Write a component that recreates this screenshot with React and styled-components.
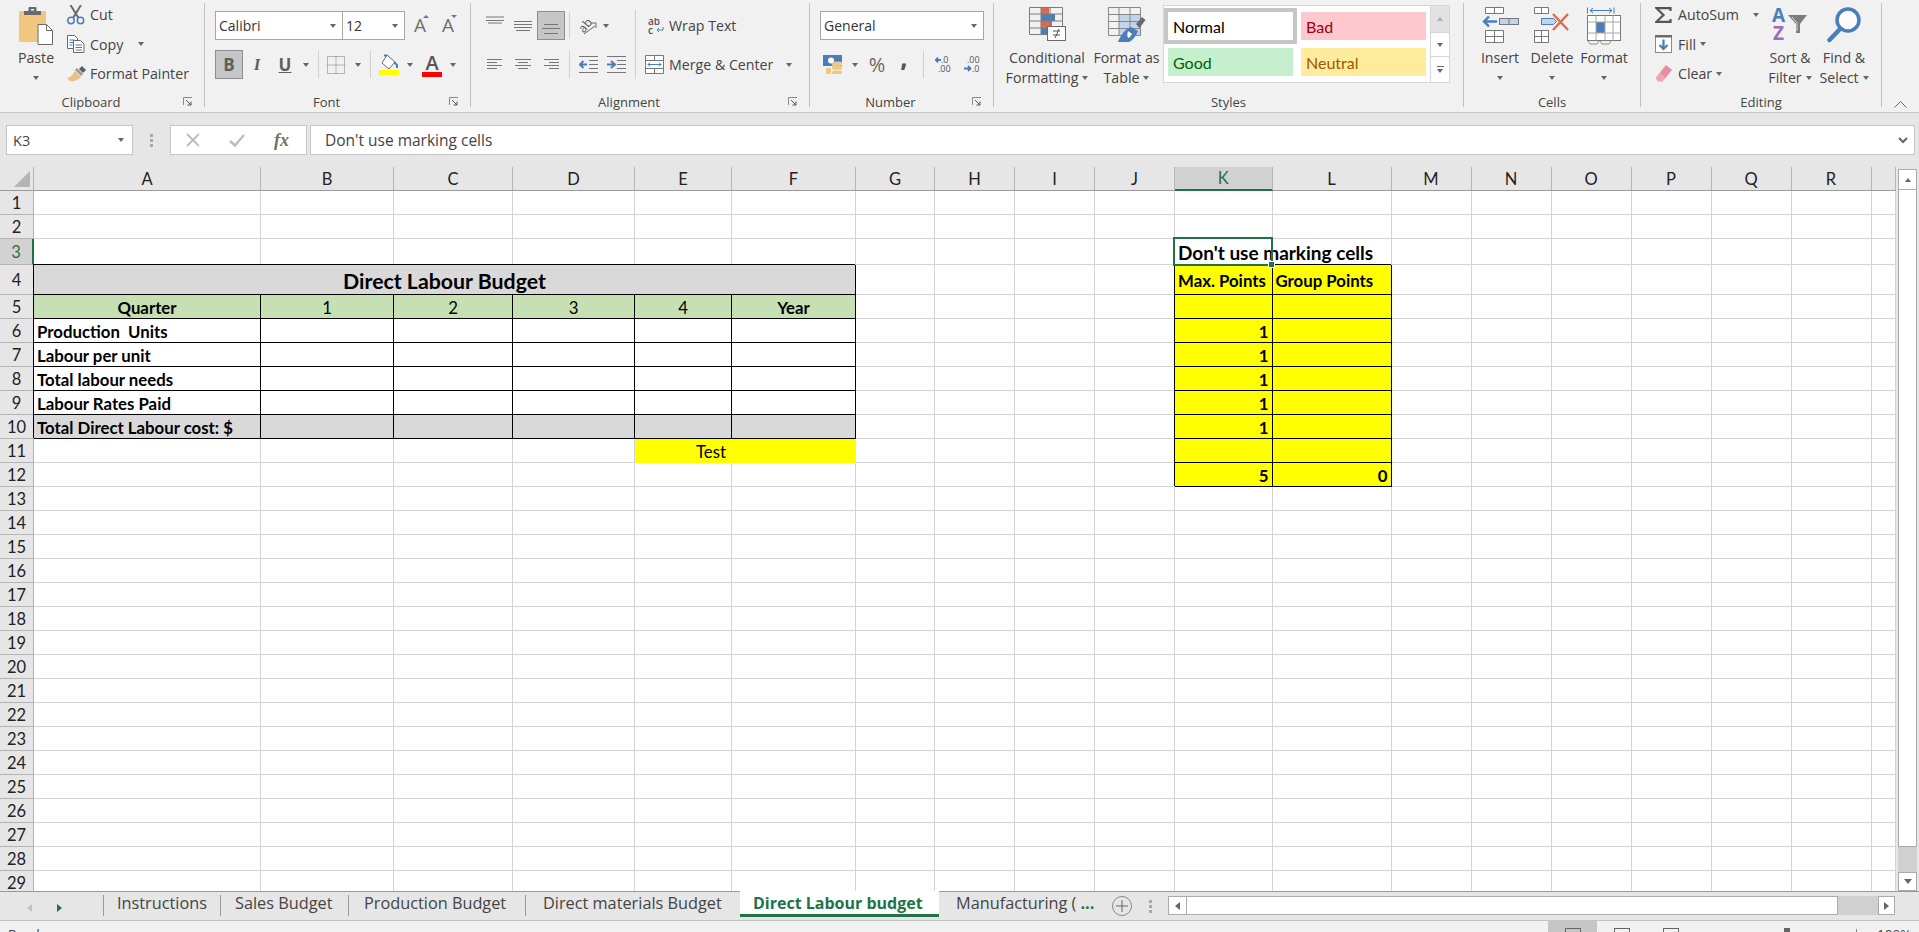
import styled, { createGlobalStyle } from 'styled-components'

const UI_FONT = '"Open Sans", "Noto Sans", sans-serif'
const SHEET_FONT = 'Lato, "Liberation Sans", sans-serif'
const BLUE = '#4a7eba'
const GRAY = '#6a6a6a'
const GREEN = '#217346'

const GlobalStyle = createGlobalStyle`
    html, body {
        margin: 0;
        height: 932px;
        overflow: hidden;
        background: #f1f1f1;
        font-family: ${UI_FONT};
    }
    svg { display: block; flex-shrink: 0; }
`

const Page = styled.div`
    width: 1919px;
    height: 932px;
    display: flex;
    flex-direction: column;
    overflow: hidden;
`

/* ---------- ribbon ---------- */

const Ribbon = styled.div`
    display: flex;
    height: 112px;
    flex-shrink: 0;
    background: #f1f1f1;
    border-bottom: 1px solid #c9c9c9;
    color: #444;
    font-size: 14.2px;
`

const Group = styled.div`
    width: ${({ $w }) => $w}px;
    flex-shrink: 0;
    display: flex;
    flex-direction: column;
`

const GroupBody = styled.div`
    height: 92px;
    display: flex;
    padding-left: ${({ $pl }) => $pl || 0}px;
`

const GroupFooter = styled.div`
    position: relative;
    height: 20px;
    line-height: 20px;
    text-align: center;
    padding-right: ${({ $launcher }) => ($launcher ? 22 : 0)}px;
    font-size: 13px;
`

const Launcher = styled.svg`
    position: absolute;
    right: 11px;
    top: 5px;
`

const GroupSep = styled.div`
    width: 1px;
    height: 104px;
    margin-top: 3px;
    background: #c2c2c2;
    flex-shrink: 0;
`

const BigButton = styled.div`
    width: ${({ $w }) => $w}px;
    flex-shrink: 0;
    margin-left: ${({ $ml }) => $ml || 0}px;
    display: flex;
    flex-direction: column;
    align-items: center;
    padding-top: 7px;
`

const BigIcon = styled.div`
    height: 38px;
    margin-bottom: 3px;
    display: flex;
    align-items: flex-start;
`

const BigLine = styled.div`
    height: 20px;
    line-height: 20px;
    white-space: nowrap;
    display: flex;
    align-items: center;
`

const Caret = styled.span`
    display: inline-block;
    width: 0;
    height: 0;
    flex-shrink: 0;
    margin-left: ${({ $ml }) => $ml || 0}px;
    border-left: 3.5px solid transparent;
    border-right: 3.5px solid transparent;
    border-top: 4px solid #666;
`

const SmallStack = styled.div`
    display: flex;
    flex-direction: column;
    margin-left: ${({ $ml }) => $ml || 0}px;
    width: ${({ $w }) => ($w ? `${$w}px` : 'auto')};
`

const SmallButton = styled.div`
    display: flex;
    align-items: center;
    height: 29.5px;
    white-space: nowrap;
`

const SmallIcon = styled.div`
    width: ${({ $w }) => $w || 23}px;
    flex-shrink: 0;
    padding-left: ${({ $pl }) => $pl || 0}px;
    box-sizing: border-box;
`

const ToolColumn = styled.div`
    display: flex;
    flex-direction: column;
    padding-top: 11px;
    gap: 10px;
    width: ${({ $w }) => ($w ? `${$w}px` : 'auto')};
`

const ToolRow = styled.div`
    display: flex;
    align-items: center;
    height: 29px;
    white-space: nowrap;
`

const Select = styled.div`
    width: ${({ $w }) => $w}px;
    height: 29px;
    box-sizing: border-box;
    margin-left: ${({ $ml }) => $ml || 0}px;
    background: #fff;
    border: 1px solid #a6a6a6;
    display: flex;
    align-items: center;
    justify-content: space-between;
    padding: 0 6px 0 3px;
    color: #333;
    font-size: 14px;
`

const ToolBtn = styled.div`
    width: ${({ $w }) => $w || 28}px;
    height: 29px;
    box-sizing: border-box;
    flex-shrink: 0;
    margin-left: ${({ $ml }) => $ml || 0}px;
    display: flex;
    align-items: center;
    justify-content: center;
    ${({ $on }) => $on && 'background: #c6c6c6; border: 1px solid #8e8e8e;'}
`

const CaretBox = styled.div`
    width: ${({ $w }) => $w || 14}px;
    display: flex;
    justify-content: center;
    flex-shrink: 0;
`

const RowSep = styled.div`
    width: 1px;
    height: 27px;
    margin-left: ${({ $ml }) => $ml || 0}px;
    background: #d0d0d0;
    flex-shrink: 0;
`

const TallSep = styled.div`
    width: 1px;
    height: 69px;
    margin-top: 10px;
    background: #d0d0d0;
    flex-shrink: 0;
`

const FaceLetter = styled.span`
    font-family: ${({ $serif }) => ($serif ? '"Liberation Serif", serif' : UI_FONT)};
    font-weight: 700;
    font-style: ${({ $italic }) => ($italic ? 'italic' : 'normal')};
    text-decoration: ${({ $under }) => ($under ? 'underline' : 'none')};
    font-size: 17px;
    color: #5f5f5f;
`

const ResizeFont = styled.div`
    position: relative;
    width: ${({ $w }) => $w}px;
    margin-left: ${({ $ml }) => $ml || 0}px;
    font-size: 19px;
    color: #6f6f6f;
    text-align: left;
    line-height: 29px;
    &::after {
        content: '';
        position: absolute;
        left: 9px;
        top: 4px;
        border-left: 3px solid transparent;
        border-right: 3px solid transparent;
        ${({ $up }) => ($up ? `border-bottom: 3px solid ${BLUE};` : `border-top: 3px solid ${BLUE};`)}
    }
`

const ColorLetter = styled.div`
    display: flex;
    flex-direction: column;
    align-items: center;
    width: 20px;
    font-size: 20px;
    line-height: 19px;
    font-weight: 600;
    color: #555;
    &::after {
        content: '';
        width: 20px;
        height: 5px;
        background: ${({ $bar }) => $bar};
    }
`

const Percent = styled.span`
    font-size: 20px;
    color: #666;
`

const Comma = styled.span`
    font-size: 22px;
    font-weight: 800;
    color: #555;
    line-height: 16px;
    padding-bottom: 13px;
`

const Gallery = styled.div`
    width: 287px;
    height: 78px;
    box-sizing: border-box;
    margin-top: 5px;
    background: #fff;
    border: 1px solid #d6d6d6;
    display: flex;
    justify-content: space-between;
`

const StyleGrid = styled.div`
    display: grid;
    grid-template-columns: 125px 125px;
    grid-template-rows: 28px 28px;
    gap: 8px;
    padding: 6px 0 0 4px;
`

const StyleSwatch = styled.div`
    background: ${({ $bg }) => $bg};
    color: ${({ $color }) => $color};
    font-family: ${SHEET_FONT};
    font-size: 16px;
    display: flex;
    align-items: center;
    padding-left: 5px;
    ${({ $active }) => $active && 'outline: 4px solid #c6c6c6;'}
`

const GalleryScroll = styled.div`
    width: 18px;
    display: flex;
    flex-direction: column;
    border-left: 1px solid #d6d6d6;
`

const GalleryBtn = styled.div`
    height: ${({ $h }) => $h}px;
    box-sizing: border-box;
    display: flex;
    flex-direction: column;
    gap: 2px;
    align-items: center;
    justify-content: center;
    border-top: ${({ $line }) => ($line ? '1px solid #d6d6d6' : 'none')};
    background: ${({ $dim }) => ($dim ? '#e2e2e2' : '#fff')};
`

const GalleryBar = styled.span`
    width: 7px;
    height: 1px;
    background: #666;
`

const UpArrow = styled.span`
    width: 0;
    height: 0;
    border-left: 3.5px solid transparent;
    border-right: 3.5px solid transparent;
    border-bottom: 4px solid ${({ $c }) => $c || '#b0b0b0'};
`

const CollapseBox = styled.div`
    flex: 1;
    display: flex;
    justify-content: center;
    padding-top: 100px;
`

/* ---------- formula bar ---------- */

const FormulaBar = styled.div`
    height: 54px;
    flex-shrink: 0;
    box-sizing: border-box;
    background: #e6e6e6;
    display: flex;
    align-items: flex-start;
    padding: 12px 4px 0 6px;
    font-size: 14.5px;
    color: #444;
`

const NameBox = styled.div`
    width: 127px;
    height: 30px;
    box-sizing: border-box;
    background: #fff;
    border: 1px solid #c6c6c6;
    display: flex;
    align-items: center;
    justify-content: space-between;
    padding: 0 8px 0 6px;
`

const Grip = styled.div`
    width: 37px;
    height: 30px;
    display: flex;
    flex-direction: column;
    align-items: center;
    justify-content: center;
    gap: 2px;
    span {
        width: 3px;
        height: 3px;
        background: #a8a8a8;
    }
`

const FxBox = styled.div`
    width: 137px;
    height: 30px;
    box-sizing: border-box;
    background: #fff;
    border: 1px solid #c6c6c6;
    display: flex;
    align-items: center;
    padding-left: 15px;
    gap: 29px;
`

const FxLabel = styled.span`
    font-family: "Liberation Serif", serif;
    font-style: italic;
    font-weight: 700;
    font-size: 18px;
    color: #6f6f6f;
`

const FormulaInput = styled.div`
    flex: 1;
    height: 30px;
    margin-left: 3px;
    box-sizing: border-box;
    background: #fff;
    border: 1px solid #c6c6c6;
    display: flex;
    align-items: center;
    justify-content: space-between;
    padding: 0 6px 0 14px;
    font-size: 15.5px;
`

/* ---------- sheet ---------- */

const SheetArea = styled.div`
    height: 724px;
    flex-shrink: 0;
    display: flex;
    background: #e6e6e6;
`

const COLUMNS = [
    ['A', 227], ['B', 133], ['C', 119], ['D', 122], ['E', 97], ['F', 124],
    ['G', 79], ['H', 80], ['I', 80], ['J', 80], ['K', 97.5], ['L', 119],
    ['M', 80], ['N', 80], ['O', 80], ['P', 80], ['Q', 80], ['R', 80], ['', 24],
]
const ROW_HEIGHTS = Array.from({ length: 29 }, (_, i) => (i === 2 ? 26 : i === 3 ? 30 : 24))

const Sheet = styled.div`
    width: 1896px;
    height: 724px;
    overflow: hidden;
    background: #fff;
    display: grid;
    grid-template-columns: 34px ${COLUMNS.map((c) => `${c[1]}px`).join(' ')};
    grid-template-rows: 24px ${ROW_HEIGHTS.map((h) => `${h}px`).join(' ')};
    font-family: ${SHEET_FONT};
`

const Corner = styled.div`
    background: #e6e6e6;
    border-right: 1px solid #b4b4b4;
    border-bottom: 1px solid #9a9a9a;
    position: relative;
    &::after {
        content: '';
        position: absolute;
        right: 3px;
        bottom: 3px;
        width: 16px;
        height: 16px;
        background: #b4b4b4;
        clip-path: polygon(100% 0, 100% 100%, 0 100%);
    }
`

const ColHead = styled.div`
    background: ${({ $sel }) => ($sel ? '#d2d2d2' : '#e6e6e6')};
    border-right: 1px solid #b4b4b4;
    border-bottom: ${({ $sel }) => ($sel ? `2px solid ${GREEN}` : '1px solid #9a9a9a')};
    color: ${({ $sel }) => ($sel ? GREEN : '#222')};
    font-size: 16.5px;
    display: flex;
    align-items: center;
    justify-content: center;
`

const RowHead = styled.div`
    background: ${({ $sel }) => ($sel ? '#d2d2d2' : '#e6e6e6')};
    border-right: ${({ $sel }) => ($sel ? `2px solid ${GREEN}` : '1px solid #b4b4b4')};
    border-bottom: 1px solid #b4b4b4;
    color: ${({ $sel }) => ($sel ? GREEN : '#222')};
    font-size: 16.5px;
    display: flex;
    align-items: center;
    justify-content: center;
`

const ALIGN = { left: 'flex-start', center: 'center', right: 'flex-end' }

const Cell = styled.div`
    min-width: 0;
    position: relative;
    grid-column: span ${({ $span }) => $span || 1};
    display: flex;
    align-items: center;
    justify-content: ${({ $align }) => ALIGN[$align || 'left']};
    white-space: pre;
    padding: 2px 3px 0 ${({ $pl }) => $pl || 3}px;
    box-sizing: border-box;
    color: #000;
    font-size: ${({ $size }) => $size || 16.8}px;
    font-weight: ${({ $bold }) => ($bold ? 700 : 400)};
    background: ${({ $fill }) => $fill || 'transparent'};
    border-right: 1px solid ${({ $box, $fill }) => ($box ? '#000' : $fill || '#d4d4d4')};
    border-bottom: 1px solid ${({ $box, $fill }) => ($box ? '#000' : $fill || '#d4d4d4')};
    ${({ $box }) => $box && 'box-shadow: -1px -1px 0 #000;'}
`

const Selection = styled.span`
    position: absolute;
    z-index: 2;
    left: -2px;
    top: -2px;
    right: -1px;
    bottom: -2px;
    border: 2px solid ${GREEN};
    pointer-events: none;
    &::after {
        content: '';
        position: absolute;
        right: -4px;
        bottom: -4px;
        width: 5px;
        height: 5px;
        background: ${GREEN};
        border: 1px solid #fff;
    }
`

const GREY = '#d9d9d9'
const LIME = '#c6e0b4'
const YELLOW = '#ffff00'

const buildCells = () => {
    const cells = {}
    cells.A4 = { text: 'Direct Labour Budget', span: 6, fill: GREY, box: true, bold: true, align: 'center', size: 21.3 }
    cells.A5 = { text: 'Quarter', fill: LIME, box: true, bold: true, align: 'center' }
    ;['B', 'C', 'D', 'E'].forEach((col, i) => {
        cells[`${col}5`] = { text: String(i + 1), fill: LIME, box: true, align: 'center' }
    })
    cells.F5 = { text: 'Year', fill: LIME, box: true, bold: true, align: 'center' }
    const labels = ['Production  Units', 'Labour per unit', 'Total labour needs', 'Labour Rates Paid', 'Total Direct Labour cost: $']
    labels.forEach((text, i) => {
        const row = i + 6
        const fill = row === 10 ? GREY : '#fff'
        cells[`A${row}`] = { text, fill, box: true, bold: true }
        ;['B', 'C', 'D', 'E', 'F'].forEach((col) => {
            cells[`${col}${row}`] = { fill, box: true }
        })
    })
    cells.E11 = { text: 'Test', span: 2, fill: YELLOW, pl: 61 }
    cells.K3 = { text: "Don't use marking cells", bold: true, size: 19, selected: true }
    cells.K4 = { text: 'Max. Points', fill: YELLOW, box: true, bold: true }
    cells.L4 = { text: 'Group Points', fill: YELLOW, box: true, bold: true }
    for (let row = 5; row <= 12; row++) {
        cells[`K${row}`] = { fill: YELLOW, box: true, bold: true, align: 'right' }
        cells[`L${row}`] = { fill: YELLOW, box: true, bold: true, align: 'right' }
    }
    for (let row = 6; row <= 10; row++) cells[`K${row}`].text = '1'
    cells.K12.text = '5'
    cells.L12.text = '0'
    return cells
}

const CELLS = buildCells()

const VScroll = styled.div`
    width: 23px;
    flex-shrink: 0;
    box-sizing: border-box;
    padding: 2px 2px 0 2px;
    display: flex;
    flex-direction: column;
`

const ScrollBtn = styled.div`
    height: ${({ $h }) => $h}px;
    box-sizing: border-box;
    background: #fff;
    border: 1px solid #ababab;
    display: flex;
    align-items: center;
    justify-content: center;
    flex-shrink: 0;
`

const ScrollThumb = styled.div`
    height: 657px;
    box-sizing: border-box;
    background: #fff;
    border: 1px solid #ababab;
    border-top: none;
    flex-shrink: 0;
`

const ScrollTrack = styled.div`
    flex: 1;
    background: #d0d0d0;
`

const DownArrow = styled.span`
    width: 0;
    height: 0;
    border-left: 4px solid transparent;
    border-right: 4px solid transparent;
    border-top: 5px solid #666;
`

/* ---------- tabs ---------- */

const TabBar = styled.div`
    height: 30px;
    flex-shrink: 0;
    box-sizing: border-box;
    background: #e6e6e6;
    border-top: 1px solid #9a9a9a;
    border-bottom: 1px solid #c4c4c4;
    display: flex;
    font-size: 16.3px;
    color: #444;
`

const TabNav = styled.div`
    width: 103px;
    display: flex;
    align-items: center;
    padding: 3px 0 0 27px;
    box-sizing: border-box;
    gap: 25px;
`

const NavArrow = styled.span`
    width: 0;
    height: 0;
    border-top: 4.5px solid transparent;
    border-bottom: 4.5px solid transparent;
    ${({ $dir, $c }) => ($dir === 'left' ? `border-right: 5px solid ${$c};` : `border-left: 5px solid ${$c};`)}
`

const Tab = styled.div`
    width: ${({ $w }) => $w}px;
    box-sizing: border-box;
    flex-shrink: 0;
    height: 21px;
    margin-top: 3px;
    padding: 0 0 5px ${({ $pl }) => $pl || 13}px;
    white-space: nowrap;
    overflow: hidden;
    ${({ $sep }) => $sep && 'border-left: 1px solid #9a9a9a;'}
    display: flex;
    align-items: center;
`

const ActiveTab = styled(Tab)`
    height: 26px;
    margin-top: -1px;
    padding-bottom: 0;
    background: #fff;
    color: ${GREEN};
    font-weight: 700;
    font-size: 16px;
    border-bottom: 3px solid ${GREEN};
`

const TabMore = styled.span`
    color: ${GREEN};
    margin-left: 4px;
    font-weight: 700;
`

const AddSheet = styled.div`
    width: 20px;
    height: 20px;
    box-sizing: border-box;
    margin: 4px 0 0 2px;
    border: 1px solid #888;
    border-radius: 50%;
    display: flex;
    align-items: center;
    justify-content: center;
    color: #666;
    flex-shrink: 0;
`

const TabGrip = styled(Grip)`
    width: 36px;
    height: 28px;
`

const HScroll = styled.div`
    width: 727px;
    height: 19px;
    box-sizing: border-box;
    margin-top: 4px;
    display: flex;
    background: #d0d0d0;
`

const HBtn = styled.div`
    width: ${({ $w }) => $w}px;
    box-sizing: border-box;
    background: #fff;
    border: 1px solid #ababab;
    display: flex;
    align-items: center;
    justify-content: center;
`

const HThumb = styled.div`
    width: 651px;
    box-sizing: border-box;
    background: #fff;
    border: 1px solid #ababab;
    border-left: none;
`

const HGap = styled.div`
    flex: 1;
`

/* ---------- status bar ---------- */

const StatusBar = styled.div`
    flex: 1;
    min-height: 0;
    background: #f1f1f1;
    display: flex;
    overflow: hidden;
    font-size: 13.5px;
    color: #444;
`

const Ready = styled.div`
    padding: 4px 0 0 8px;
    width: 1548px;
    box-sizing: border-box;
`

const ViewBtn = styled.div`
    width: 49px;
    height: 11px;
    background: ${({ $on }) => ($on ? '#c6c6c6' : 'transparent')};
    display: flex;
    justify-content: center;
    padding-top: 7px;
    box-sizing: border-box;
`

const ViewBar = styled.span`
    width: 16px;
    height: 4px;
    border: 1px solid #666;
    border-bottom: none;
    box-sizing: border-box;
`

const SliderMark = styled.span`
    margin: ${({ $top }) => $top}px 0 0 ${({ $ml }) => $ml}px;
    width: ${({ $w }) => $w}px;
    height: 6px;
    background: ${({ $c }) => $c};
    flex-shrink: 0;
`

const Zoom = styled.div`
    margin-left: 20px;
    padding-top: 4px;
`

/* ---------- icons ---------- */

const PasteIcon = () => (
    <svg width="34" height="38" viewBox="0 0 34 38">
        <rect x="0" y="4" width="27" height="31" rx="1" fill="#f0c77f" />
        <rect x="5" y="4" width="17" height="4" fill="#6a6a6a" />
        <rect x="9.5" y="0" width="8" height="5" rx="1" fill="#6a6a6a" />
        <rect x="12" y="2" width="3" height="1.5" fill="#f1f1f1" />
        <path d="M19 17.5h8.5l6 6v14H19z" fill="#fff" stroke="#6a6a6a" />
        <path d="M27.5 17.5v6h6" fill="none" stroke="#6a6a6a" />
    </svg>
)

const CutIcon = () => (
    <svg width="18" height="20" viewBox="0 0 18 20">
        <path d="M6 13L14 0M11.5 13L3.5 0" stroke={GRAY} strokeWidth="2" fill="none" />
        <circle cx="4" cy="15.5" r="3.2" fill="none" stroke={BLUE} strokeWidth="1.5" />
        <circle cx="13.5" cy="15.5" r="3.2" fill="none" stroke={BLUE} strokeWidth="1.5" />
    </svg>
)

const CopyIcon = () => (
    <svg width="18" height="18" viewBox="0 0 18 18">
        <path d="M.5.5h7l3 3v10h-10z" fill="#fff" stroke={GRAY} />
        <path d="M2.5 5h5M2.5 7.5h5M2.5 10h3" stroke={BLUE} />
        <path d="M6.5 5.5h7l3.5 3.5v8.500h-10.500z" fill="#fff" stroke={GRAY} />
        <path d="M8.500 10h6.500M8.500 12.500h6.500M8.500 15h6.500" stroke={BLUE} />
    </svg>
)

const PainterIcon = () => (
    <svg width="19" height="16" viewBox="0 0 19 16">
        <path d="M0 12C4 12 6 8 8 5l6 6c-3 3-8 5-11 4z" fill="#e9bf82" />
        <path d="M8 4l2-2 6 6-2 2z" fill="#9a9a9a" />
        <path d="M12 3l3-3 4 4-3 3z" fill="#5f5f5f" />
    </svg>
)

const BordersIcon = () => (
    <svg width="18" height="18" viewBox="0 0 18 18">
        <path d="M.5.500h17v17h-17zM9 .5v17M.5 9h17" fill="none" stroke="#777" strokeDasharray="1 1" />
    </svg>
)

const FillIcon = () => (
    <svg width="20" height="21" viewBox="0 0 20 21">
        <path d="M8 1l8 7-6 7-7-6z" fill="#fff" stroke={GRAY} />
        <path d="M5 1.500h3M15 8l3 3v3" fill="none" stroke={BLUE} strokeWidth="2" />
        <rect x="0" y="16" width="20" height="5" fill="#ffff00" />
    </svg>
)

const LinesIcon = ({ lines, w = 20, h = 22 }) => (
    <svg width={w} height={h} viewBox={`0 0 ${w} ${h}`}>
        {lines.map(([x1, x2, y]) => (
            <line key={`${x1}-${y}`} x1={x1} x2={x2} y1={y} y2={y} stroke="#767676" />
        ))}
    </svg>
)

const OrientIcon = () => (
    <svg width="20" height="20" viewBox="0 0 20 20">
        <text x="1" y="15" fontSize="12" fontFamily={UI_FONT} fill="#555" transform="rotate(-50 6 11)">ab</text>
        <path d="M6 18l11-8M13 7h5v5" fill="none" stroke="#666" />
    </svg>
)

const IndentIcon = ({ flip }) => (
    <svg width="19" height="17" viewBox="0 0 19 17">
        {flip ? (
            <path d="M0 8.500h7M4 5l4 3.500-4 3.500" fill="none" stroke={BLUE} strokeWidth="2" />
        ) : (
            <path d="M8 8.500H1M4.500 5L1 8.500 4.500 12" fill="none" stroke={BLUE} strokeWidth="2" />
        )}
        <path d="M0 .5h19M0 16.500h19M10 4.500h9M10 8.500h9M10 12.500h9" stroke="#767676" />
    </svg>
)

const WrapIcon = () => (
    <svg width="17" height="16" viewBox="0 0 17 16">
        <text x="0" y="7" fontSize="10" fontFamily={UI_FONT} fill="#555" fontWeight="600">ab</text>
        <text x="0" y="15.500" fontSize="10" fontFamily={UI_FONT} fill="#555" fontWeight="600">c</text>
        <path d="M15 9v3H9M11 10l-2 2 2 2" fill="none" stroke={BLUE} />
    </svg>
)

const MergeIcon = () => (
    <svg width="19" height="19" viewBox="0 0 19 19">
        <path d="M.5.500h18v18H.5zM.5 5.500h18M.5 13.500h18M9.500.5v5M9.500 13.500v5" fill="#fff" stroke="#767676" />
        <path d="M3 9.500h13M5 7.500l-2 2 2 2M14 7.500l2 2-2 2" fill="none" stroke={BLUE} />
    </svg>
)

const CurrencyIcon = () => (
    <svg width="20" height="20" viewBox="0 0 20 20">
        <rect x="0" y="0" width="19" height="11" fill={BLUE} />
        <circle cx="8" cy="5.500" r="3" fill="#fff" />
        <rect x="9" y="7" width="10" height="3.500" rx="1.500" fill="#f0c77f" stroke="#f1f1f1" strokeWidth=".5" />
        <rect x="9" y="11" width="10" height="3.500" rx="1.500" fill="#f0c77f" />
        <rect x="9" y="15.500" width="10" height="3.500" rx="1.500" fill="#f0c77f" />
        <rect x="3" y="13" width="5" height="6" rx="1" fill="#f0c77f" />
    </svg>
)

const DecimalIcon = ({ more }) => (
    <svg width="17" height="17" viewBox="0 0 17 17">
        <text x={more ? 4 : 6} y="7" fontSize="9" fontFamily={UI_FONT} fill="#555">{more ? '.00' : '.0'}</text>
        <text x={more ? 9 : 3} y="16" fontSize="9" fontFamily={UI_FONT} fill="#555">{more ? '.0' : '.00'}</text>
        {more ? (
            <path d="M1 12.500h6M5 10l2.500 2.500L5 15" fill="none" stroke={BLUE} strokeWidth="1.800" />
        ) : (
            <path d="M6 4H0.800M3 1.500L.8 4 3 6.500" fill="none" stroke={BLUE} strokeWidth="1.800" />
        )}
    </svg>
)

const CondFormatIcon = () => (
    <svg width="37" height="34" viewBox="0 0 37 34">
        <rect x="12" y="1" width="8" height="6" fill="#dd6b4b" />
        <rect x="12" y="7" width="14" height="7" fill={BLUE} />
        <rect x="12" y="14" width="11" height="7" fill="#dd6b4b" />
        <rect x="12" y="21" width="7" height="6" fill={BLUE} />
        <path d="M.5.500h33v27H.5zM.5 7h33M.5 14h33M.5 21h33M12 .5v27M21 .5v27" fill="none" stroke="#7c7c7c" />
        <rect x="18.500" y="19.500" width="18" height="14" fill="#fff" stroke="#6a6a6a" />
        <path d="M24 24h7M24 28h7M30 22l-4 9" stroke="#555" fill="none" />
    </svg>
)

const TableStyleIcon = () => (
    <svg width="38" height="36" viewBox="0 0 38 36">
        <rect x="11" y="8" width="22" height="21" fill="#c2d4e9" />
        <path d="M.5.500h32v28H.5zM.5 7.500h32M.5 14.500h32M.5 21.500h32M11 .5v28M22 .5v28" fill="none" stroke="#888" />
        <path d="M28 17l6-7 3.500 3-6 8z" fill="#6a6a6a" />
        <path d="M10 35c2-6 7-13 13-15l7 4c-2 5-5 9-9 11z" fill={BLUE} />
        <path d="M20 24l4 3-3 4c-2 0-2-4-1-7z" fill="#fff" />
    </svg>
)

const InsertIcon = () => (
    <svg width="37" height="36" viewBox="0 0 37 36">
        <path d="M3.500.5h18v6h-18zM12.500.5v6M3.500 23.500h18v12h-18zM3.500 29.500h18M12.500 23.500v12" fill="#fff" stroke="#777" />
        <rect x="17.500" y="11.500" width="19" height="6" fill="#c2d4e9" stroke="#777" />
        <path d="M27 11.500v6" stroke="#777" />
        <path d="M15 14.500H2M7 9.500l-5 5 5 5" fill="none" stroke={BLUE} strokeWidth="2.400" />
    </svg>
)

const DeleteIcon = () => (
    <svg width="36" height="36" viewBox="0 0 36 36">
        <path d="M.5.500h14v6H.5zM7.500.5v6M.5 23.500h14v12H.5zM.5 29.500h14M7.500 23.500v12" fill="#fff" stroke="#777" />
        <path d="M7.500 11.500h12l3 3-3 3h-12z" fill="#c2d4e9" stroke={BLUE} />
        <path d="M19 7l15 16M34 7L19 23" stroke="#dd6b4b" strokeWidth="2.400" fill="none" />
    </svg>
)

const FormatCellsIcon = () => (
    <svg width="35" height="38" viewBox="0 0 35 38">
        <path d="M.5.500v6M27 .5v6M3 3.500h22M6 1l-3 2.500L6 6M22 1l3 2.500L22 6" fill="none" stroke={BLUE} />
        <rect x=".5" y="8.500" width="33" height="25" fill="#fff" stroke="#777" />
        <rect x="9" y="15" width="9" height="11" fill={BLUE} />
        <path d="M.5 15h33M.5 26h33M9 8.500v25M18 8.500v25M26 8.500v25" stroke="#a8a8a8" fill="none" />
        <path d="M1 34l2 3h7l2-3M13 34l2 3h7l2-3" fill="none" stroke="#8c8c8c" />
    </svg>
)

const SigmaIcon = () => (
    <svg width="17" height="16" viewBox="0 0 17 16">
        <path d="M15.500 4V1.200H1.500L8.500 8l-7 6.800h14V12" fill="none" stroke="#555" strokeWidth="2.200" />
    </svg>
)

const FillDownIcon = () => (
    <svg width="17" height="18" viewBox="0 0 17 18">
        <rect x=".5" y=".5" width="16" height="17" fill="#fff" stroke="#8a8a8a" />
        <rect x="0" y="0" width="17" height="2.500" fill="#6a6a6a" />
        <path d="M8.500 4.500v9M4.500 10l4 4 4-4" fill="none" stroke={BLUE} strokeWidth="2.200" />
    </svg>
)

const EraserIcon = () => (
    <svg width="17" height="17" viewBox="0 0 17 17">
        <path d="M11 0l6 5-6.500 8-6-5z" fill="#e88d9f" />
        <path d="M4.500 8l6 5-3 3.500H3L.5 13z" fill="#e88d9f" opacity=".75" />
    </svg>
)

const SortIcon = () => (
    <svg width="36" height="35" viewBox="0 0 36 35">
        <text x="0" y="15" fontSize="19" fontWeight="700" fontFamily={UI_FONT} fill={BLUE}>A</text>
        <text x="1" y="33" fontSize="19" fontWeight="700" fontFamily={UI_FONT} fill="#9a6bbf">Z</text>
        <path d="M16 8h19l-7 9v9h-4v-9z" fill="#7c7c7c" />
        <path d="M20 10l5 6v8" fill="none" stroke="#d8d8d8" />
    </svg>
)

const FindIcon = () => (
    <svg width="35" height="36" viewBox="0 0 35 36">
        <circle cx="21" cy="13" r="11" fill="#fdfdfd" stroke={BLUE} strokeWidth="3.500" />
        <path d="M13 22L2.500 33" stroke={BLUE} strokeWidth="4.500" strokeLinecap="round" />
    </svg>
)

const LauncherIcon = () => (
    <Launcher width="10" height="10" viewBox="0 0 10 10">
        <path d="M.5 8V.5H9" fill="none" stroke="#8a8a8a" />
        <path d="M3 3l5 5M8 4.500V8H4.500" fill="none" stroke="#555" />
    </Launcher>
)

const ChevronUp = () => (
    <svg width="13" height="8" viewBox="0 0 13 8">
        <path d="M.5 7.500l6-6 6 6" fill="none" stroke="#666" />
    </svg>
)

const ChevronDown = () => (
    <svg width="10" height="7" viewBox="0 0 10 7">
        <path d="M1 1l4 4 4-4" fill="none" stroke="#666" strokeWidth="2" />
    </svg>
)

const CrossMark = () => (
    <svg width="14" height="14" viewBox="0 0 14 14">
        <path d="M1 1l12 12M13 1L1 13" stroke="#bcbcbc" strokeWidth="1.800" />
    </svg>
)

const CheckMark = () => (
    <svg width="16" height="13" viewBox="0 0 16 13">
        <path d="M1 7l5 4.500L15 1" fill="none" stroke="#bcbcbc" strokeWidth="2.400" />
    </svg>
)

const PlusMark = () => (
    <svg width="12" height="12" viewBox="0 0 12 12">
        <path d="M6 0v12M0 6h12" stroke="#666" />
    </svg>
)

const TOP_LINES = [[1, 19, 2], [1, 19, 5.5], [3, 17, 8]]
const MIDDLE_LINES = [[1, 19, 6.5], [1, 19, 9.5], [1, 19, 12.5], [3, 17, 15.5]]
const BOTTOM_LINES = [[3, 17, 9.5], [1, 19, 13.5], [3, 17, 18.5]]
const LEFT_LINES = [[2, 17, 5.5], [2, 12, 8.5], [2, 17, 11.5], [2, 12, 14.5]]
const CENTER_LINES = [[2, 18, 5.5], [5, 15, 8.5], [2, 18, 11.5], [5, 15, 14.5]]
const RIGHT_LINES = [[3, 18, 5.5], [8, 18, 8.5], [3, 18, 11.5], [8, 18, 14.5]]

const TABS = [
    ['Instructions', 117, 13],
    ['Sales Budget', 128, 14],
    ['Production Budget', 177, 15],
    ['Direct materials Budget', 215, 17],
]

function HomeRibbon() {
    return (
        <Ribbon>
            <Group $w={204}>
                <GroupBody $pl={16}>
                    <BigButton $w={40}>
                        <BigIcon><PasteIcon /></BigIcon>
                        <BigLine>Paste</BigLine>
                        <BigLine><Caret /></BigLine>
                    </BigButton>
                    <SmallStack $ml={11}>
                        <SmallButton><SmallIcon><CutIcon /></SmallIcon>Cut</SmallButton>
                        <SmallButton><SmallIcon><CopyIcon /></SmallIcon>Copy<Caret $ml={15} /></SmallButton>
                        <SmallButton><SmallIcon><PainterIcon /></SmallIcon>Format Painter</SmallButton>
                    </SmallStack>
                </GroupBody>
                <GroupFooter $launcher>Clipboard<LauncherIcon /></GroupFooter>
            </Group>
            <GroupSep />

            <Group $w={265}>
                <GroupBody $pl={10}>
                    <ToolColumn>
                        <ToolRow>
                            <Select $w={128}>Calibri<Caret /></Select>
                            <Select $w={63} $ml={-1}>12<Caret /></Select>
                            <ResizeFont $w={28} $ml={9} $up>A</ResizeFont>
                            <ResizeFont $w={20} $up={false}>A</ResizeFont>
                        </ToolRow>
                        <ToolRow>
                            <ToolBtn $on><FaceLetter>B</FaceLetter></ToolBtn>
                            <ToolBtn><FaceLetter $serif $italic>I</FaceLetter></ToolBtn>
                            <ToolBtn><FaceLetter $under>U</FaceLetter></ToolBtn>
                            <CaretBox><Caret /></CaretBox>
                            <RowSep $ml={5} />
                            <ToolBtn $ml={3}><BordersIcon /></ToolBtn>
                            <CaretBox $w={16}><Caret /></CaretBox>
                            <RowSep $ml={4} />
                            <ToolBtn $ml={4}><FillIcon /></ToolBtn>
                            <CaretBox><Caret /></CaretBox>
                            <ToolBtn $ml={1}><ColorLetter $bar="#ff0000">A</ColorLetter></ToolBtn>
                            <CaretBox><Caret /></CaretBox>
                        </ToolRow>
                    </ToolColumn>
                </GroupBody>
                <GroupFooter $launcher>Font<LauncherIcon /></GroupFooter>
            </Group>
            <GroupSep />

            <Group $w={338}>
                <GroupBody $pl={10}>
                    <ToolColumn $w={154}>
                        <ToolRow>
                            <ToolBtn><LinesIcon lines={TOP_LINES} /></ToolBtn>
                            <ToolBtn><LinesIcon lines={MIDDLE_LINES} /></ToolBtn>
                            <ToolBtn $on><LinesIcon lines={BOTTOM_LINES} /></ToolBtn>
                            <RowSep $ml={4} />
                            <ToolBtn $ml={4}><OrientIcon /></ToolBtn>
                            <Caret $ml={1} />
                        </ToolRow>
                        <ToolRow>
                            <ToolBtn><LinesIcon lines={LEFT_LINES} /></ToolBtn>
                            <ToolBtn><LinesIcon lines={CENTER_LINES} /></ToolBtn>
                            <ToolBtn><LinesIcon lines={RIGHT_LINES} /></ToolBtn>
                            <RowSep $ml={4} />
                            <ToolBtn $ml={4}><IndentIcon /></ToolBtn>
                            <ToolBtn><IndentIcon flip /></ToolBtn>
                        </ToolRow>
                    </ToolColumn>
                    <TallSep />
                    <ToolColumn>
                        <ToolRow>
                            <SmallIcon $w={33} $pl={12}><WrapIcon /></SmallIcon>
                            Wrap Text
                        </ToolRow>
                        <ToolRow>
                            <SmallIcon $w={33} $pl={9}><MergeIcon /></SmallIcon>
                            Merge &amp; Center<Caret $ml={13} />
                        </ToolRow>
                    </ToolColumn>
                </GroupBody>
                <GroupFooter $launcher>Alignment<LauncherIcon /></GroupFooter>
            </Group>
            <GroupSep />

            <Group $w={183}>
                <GroupBody $pl={10}>
                    <ToolColumn>
                        <ToolRow>
                            <Select $w={164}>General<Caret /></Select>
                        </ToolRow>
                        <ToolRow>
                            <ToolBtn $w={26}><CurrencyIcon /></ToolBtn>
                            <CaretBox $w={18}><Caret /></CaretBox>
                            <ToolBtn $w={26}><Percent>%</Percent></ToolBtn>
                            <ToolBtn><Comma>,</Comma></ToolBtn>
                            <RowSep $ml={5} />
                            <ToolBtn $ml={5}><DecimalIcon /></ToolBtn>
                            <ToolBtn><DecimalIcon more /></ToolBtn>
                        </ToolRow>
                    </ToolColumn>
                </GroupBody>
                <GroupFooter $launcher>Number<LauncherIcon /></GroupFooter>
            </Group>
            <GroupSep />

            <Group $w={469}>
                <GroupBody $pl={13}>
                    <BigButton $w={80}>
                        <BigIcon><CondFormatIcon /></BigIcon>
                        <BigLine>Conditional</BigLine>
                        <BigLine>Formatting<Caret $ml={4} /></BigLine>
                    </BigButton>
                    <BigButton $w={73} $ml={3}>
                        <BigIcon><TableStyleIcon /></BigIcon>
                        <BigLine>Format as</BigLine>
                        <BigLine>Table<Caret $ml={4} /></BigLine>
                    </BigButton>
                    <Gallery>
                        <StyleGrid>
                            <StyleSwatch $bg="#fff" $color="#000" $active>Normal</StyleSwatch>
                            <StyleSwatch $bg="#ffc7ce" $color="#9c0006">Bad</StyleSwatch>
                            <StyleSwatch $bg="#c6efce" $color="#006100">Good</StyleSwatch>
                            <StyleSwatch $bg="#ffeb9c" $color="#9c5700">Neutral</StyleSwatch>
                        </StyleGrid>
                        <GalleryScroll>
                            <GalleryBtn $h={26} $dim><UpArrow /></GalleryBtn>
                            <GalleryBtn $h={24} $line><Caret /></GalleryBtn>
                            <GalleryBtn $h={26} $line><GalleryBar /><Caret /></GalleryBtn>
                        </GalleryScroll>
                    </Gallery>
                </GroupBody>
                <GroupFooter>Styles</GroupFooter>
            </Group>
            <GroupSep />

            <Group $w={176}>
                <GroupBody $pl={10}>
                    <BigButton $w={52}>
                        <BigIcon><InsertIcon /></BigIcon>
                        <BigLine>Insert</BigLine>
                        <BigLine><Caret /></BigLine>
                    </BigButton>
                    <BigButton $w={52}>
                        <BigIcon><DeleteIcon /></BigIcon>
                        <BigLine>Delete</BigLine>
                        <BigLine><Caret /></BigLine>
                    </BigButton>
                    <BigButton $w={52}>
                        <BigIcon><FormatCellsIcon /></BigIcon>
                        <BigLine>Format</BigLine>
                        <BigLine><Caret /></BigLine>
                    </BigButton>
                </GroupBody>
                <GroupFooter>Cells</GroupFooter>
            </Group>
            <GroupSep />

            <Group $w={240}>
                <GroupBody $pl={14}>
                    <SmallStack $w={108}>
                        <SmallButton><SmallIcon><SigmaIcon /></SmallIcon>AutoSum<Caret $ml={14} /></SmallButton>
                        <SmallButton><SmallIcon><FillDownIcon /></SmallIcon>Fill<Caret $ml={4} /></SmallButton>
                        <SmallButton><SmallIcon><EraserIcon /></SmallIcon>Clear<Caret $ml={4} /></SmallButton>
                    </SmallStack>
                    <BigButton $w={54}>
                        <BigIcon><SortIcon /></BigIcon>
                        <BigLine>Sort &amp;</BigLine>
                        <BigLine>Filter<Caret $ml={4} /></BigLine>
                    </BigButton>
                    <BigButton $w={54}>
                        <BigIcon><FindIcon /></BigIcon>
                        <BigLine>Find &amp;</BigLine>
                        <BigLine>Select<Caret $ml={4} /></BigLine>
                    </BigButton>
                </GroupBody>
                <GroupFooter>Editing</GroupFooter>
            </Group>
            <GroupSep />
            <CollapseBox><ChevronUp /></CollapseBox>
        </Ribbon>
    )
}

function Spreadsheet() {
    const rendered = []
    ROW_HEIGHTS.forEach((_, r) => {
        const rowNum = r + 1
        rendered.push(<RowHead key={`head-${rowNum}`} $sel={rowNum === 3}>{rowNum}</RowHead>)
        let skip = 0
        COLUMNS.forEach(([name], c) => {
            if (skip > 0) {
                skip -= 1
                return
            }
            const cell = CELLS[`${name}${rowNum}`] || {}
            if (cell.span) skip = cell.span - 1
            rendered.push(
                <Cell
                    key={`${c}-${rowNum}`}
                    $span={cell.span}
                    $fill={cell.fill}
                    $box={cell.box}
                    $bold={cell.bold}
                    $align={cell.align}
                    $size={cell.size}
                    $pl={cell.pl}
                >
                    {cell.text}
                    {cell.selected && <Selection />}
                </Cell>
            )
        })
    })

    return (
        <SheetArea>
            <Sheet>
                <Corner />
                {COLUMNS.map(([name], i) => (
                    <ColHead key={`col-${i}`} $sel={name === 'K'}>{name}</ColHead>
                ))}
                {rendered}
            </Sheet>
            <VScroll>
                <ScrollBtn $h={21}><UpArrow $c="#666" /></ScrollBtn>
                <ScrollThumb />
                <ScrollTrack />
                <ScrollBtn $h={19}><DownArrow /></ScrollBtn>
            </VScroll>
        </SheetArea>
    )
}

export default function App() {
    return (
        <Page>
            <GlobalStyle />
            <HomeRibbon />

            <FormulaBar>
                <NameBox>K3<Caret /></NameBox>
                <Grip><span /><span /><span /></Grip>
                <FxBox>
                    <CrossMark />
                    <CheckMark />
                    <FxLabel>fx</FxLabel>
                </FxBox>
                <FormulaInput>
                    Don't use marking cells
                    <ChevronDown />
                </FormulaInput>
            </FormulaBar>

            <Spreadsheet />

            <TabBar>
                <TabNav>
                    <NavArrow $dir="left" $c="#c4c4c4" />
                    <NavArrow $dir="right" $c={GREEN} />
                </TabNav>
                {TABS.map(([name, w, pl]) => (
                    <Tab key={name} $w={w} $pl={pl} $sep>{name}</Tab>
                ))}
                <ActiveTab $w={199}>Direct Labour budget</ActiveTab>
                <Tab $w={171} $pl={17}>Manufacturing (<TabMore>...</TabMore></Tab>
                <AddSheet><PlusMark /></AddSheet>
                <TabGrip><span /><span /><span /></TabGrip>
                <HScroll>
                    <HBtn $w={19}><NavArrow $dir="left" $c="#666" /></HBtn>
                    <HThumb />
                    <HGap />
                    <HBtn $w={17}><NavArrow $dir="right" $c="#666" /></HBtn>
                </HScroll>
            </TabBar>

            <StatusBar>
                <Ready>Ready</Ready>
                <ViewBtn $on><ViewBar /></ViewBtn>
                <ViewBtn><ViewBar /></ViewBtn>
                <ViewBtn><ViewBar /></ViewBtn>
                <SliderMark $top={7} $ml={89} $w={6} $c="#666" />
                <SliderMark $top={8} $ml={66} $w={1} $c="#888" />
                <Zoom>100%</Zoom>
            </StatusBar>
        </Page>
    )
}
